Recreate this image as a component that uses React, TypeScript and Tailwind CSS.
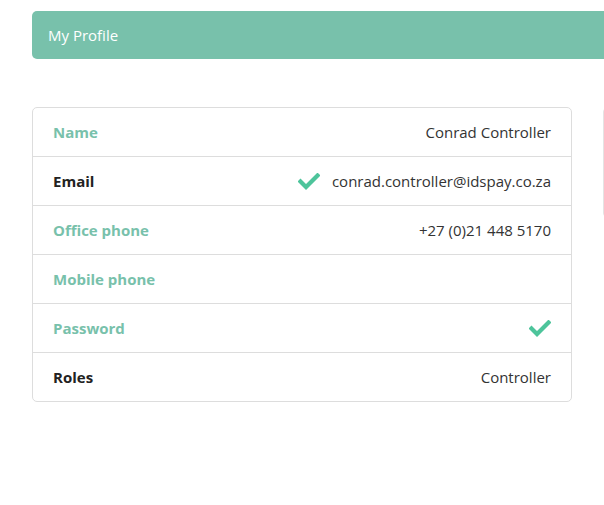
function Check() {
    return (
        <svg width="22" height="17" viewBox="0 0 22 17" fill="none">
            <path d="M2.5 8.5 L8 14 L19.5 2.5" stroke="#4dc49b" strokeWidth="4.2" strokeLinecap="square" />
        </svg>
    )
}

const rows = [
    { label: "Name", teal: true, value: "Conrad Controller" },
    { label: "Email", teal: false, value: "conrad.controller@idspay.co.za", check: true },
    { label: "Office phone", teal: true, value: "+27 (0)21 448 5170" },
    { label: "Mobile phone", teal: true, value: "" },
    { label: "Password", teal: true, value: "", check: true },
    { label: "Roles", teal: false, value: "Controller" },
]

export default function App() {
    return (
        <div className="w-[604px] h-[505px] overflow-hidden bg-white pt-[11px] pl-[32px] font-['Open_Sans',sans-serif]">
            <div className="w-[600px] h-[48px] flex items-center pl-4 rounded-l-[5px] bg-[#78c1ab] text-white text-[15px]">
                My Profile
            </div>
            <div className="flex gap-[31px] mt-[48px] items-start">
                <div className="w-[540px] shrink-0 border border-[#dddddd] rounded-[5px]">
                    {rows.map((r, i) => (
                        <div
                            key={r.label}
                            className={`flex items-center justify-between px-5 ${i > 0 ? "h-[49px] border-t border-[#dddddd]" : "h-[48px]"}`}
                        >
                            <span className={`font-bold text-[15px] ${r.teal ? "text-[#78c1ab]" : "text-[#222222]"}`}>
                                {r.label}
                            </span>
                            <span className="flex items-center gap-3 text-[15px] text-[#333333]">
                                {r.check && <Check />}
                                {r.value && <span>{r.value}</span>}
                            </span>
                        </div>
                    ))}
                </div>
                <div className="w-[300px] shrink-0 h-[111px] border border-[#e4e4e4] rounded-[5px]">
                    <div className="h-[49px] border-b border-[#eeeeee]"></div>
                </div>
            </div>
        </div>
    )
}
